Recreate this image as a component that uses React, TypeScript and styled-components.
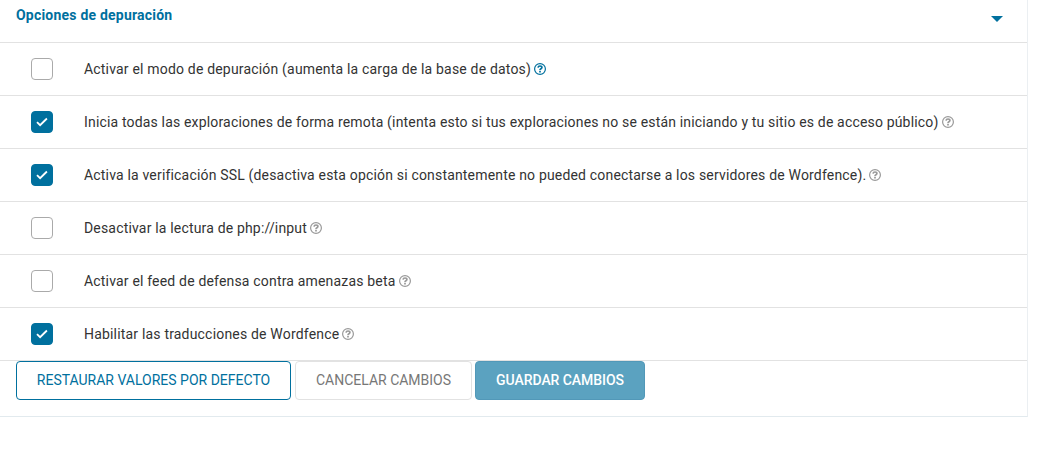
import React from "react";
import styled, { createGlobalStyle } from "styled-components";

const Global = createGlobalStyle`
  *{box-sizing:border-box}
  body{margin:0;background:#fff;font-family:Roboto,"Liberation Sans",sans-serif;color:#333}
`;
const Panel = styled.section`
  width:1028px;height:417px;border-right:1px solid #ebeff2;border-bottom:1px solid #e2eaee;
`;
const Header = styled.header`
  display:flex;justify-content:space-between;align-items:flex-start;height:42px;padding:7px 24px 0 16px;
`;
const Title = styled.h2`
  margin:0;font-size:14px;line-height:17px;font-weight:700;letter-spacing:.21px;color:#00709e;
`;
const Caret = styled.svg`display:block;width:12px;height:6px;margin-top:9px;`;
const List = styled.ul`
  list-style:none;margin:0;padding:0;border-bottom:1px solid #e2e2e2;
`;
const Row = styled.li`
  display:flex;align-items:center;height:53px;border-top:1px solid #e2e2e2;padding-left:31px;
`;
const Box = styled.span<{ $on: boolean }>`
  display:flex;align-items:center;justify-content:center;width:22px;height:22px;flex:none;
  margin-right:31px;border-radius:4px;
  border:1px solid ${p => (p.$on ? "#00709e" : "#aaa")};
  background:${p => (p.$on ? "#00709e" : "#fff")};
`;
const Label = styled.span<{ $track: number }>`
  font-size:14px;line-height:20px;letter-spacing:${p => p.$track}px;white-space:nowrap;
`;
const Help = styled.svg<{ $active?: boolean }>`
  display:block;width:12px;height:12px;margin-left:3px;color:${p => (p.$active ? "#00709e" : "#999")};
`;
const Actions = styled.div`display:flex;gap:4px;padding-left:16px;`;
const Button = styled.button<{ $kind: "outline" | "muted" | "primary"; $w: number }>`
  width:${p => p.$w}px;height:39px;padding:0 0 2px;border-radius:4px;
  font:${p => (p.$kind === "primary" ? 500 : 400)} 14px/20px Roboto,sans-serif;
  letter-spacing:${p => (p.$kind === "primary" ? "-.07px" : "0")};
  text-transform:uppercase;white-space:nowrap;
  border:1px solid ${p => ({ outline: "#00709e", muted: "#e2e2e2", primary: "#5298b8" })[p.$kind]};
  color:${p => ({ outline: "#00709e", muted: "#777", primary: "#fff" })[p.$kind]};
  background:${p => (p.$kind === "primary" ? "#5ba2c0" : "#fff")};
  margin-left:${p => (p.$kind === "primary" ? "-1px" : "0")};
`;

const options = [
  { text: "Activar el modo de depuración (aumenta la carga de la base de datos)", on: false, active: true, track: 0.185 },
  { text: "Inicia todas las exploraciones de forma remota (intenta esto si tus exploraciones no se están iniciando y tu sitio es de acceso público)", on: true, track: 0.17 },
  { text: "Activa la verificación SSL (desactiva esta opción si constantemente no pueded conectarse a los servidores de Wordfence).", on: true, track: 0.178 },
  { text: "Desactivar la lectura de php://input", on: false, track: 0.175 },
  { text: "Activar el feed de defensa contra amenazas beta", on: false, track: 0.18 },
  { text: "Habilitar las traducciones de Wordfence", on: true, track: 0.185 },
];

export default function App() {
  return (
    <>
      <Global />
      <Panel>
        <Header>
          <Title>Opciones de depuración</Title>
          <Caret viewBox="0 0 12 6"><path d="M0 0h12L6 6z" fill="#00709e" /></Caret>
        </Header>
        <List>
          {options.map(o => (
            <Row key={o.text}>
              <Box $on={o.on}>
                {o.on && (
                  <svg width="12" height="10" viewBox="0 0 12 10"><path d="M1 5.200 4.100 8.200 10.900 1.500" fill="none" stroke="#fff" strokeWidth="1.8" /></svg>
                )}
              </Box>
              <Label $track={o.track}>{o.text}</Label>
              <Help $active={o.active} viewBox="0 0 12 12" fill="none" stroke="currentColor">
                <circle cx="6" cy="6" r="5.4" strokeWidth="1.2" />
                <path d="M4 4.700C4.200 3.500 5 3 6 3s1.900.6 1.900 1.500C7.900 5.700 6 5.700 6 7" strokeWidth="1.7" />
                <path d="M6 7.800V9.400" strokeWidth="1.7" />
              </Help>
            </Row>
          ))}
        </List>
        <Actions>
          <Button $kind="outline" $w={275}>Restaurar valores por defecto</Button>
          <Button $kind="muted" $w={177}>Cancelar cambios</Button>
          <Button $kind="primary" $w={170}>Guardar cambios</Button>
        </Actions>
      </Panel>
    </>
  );
}
